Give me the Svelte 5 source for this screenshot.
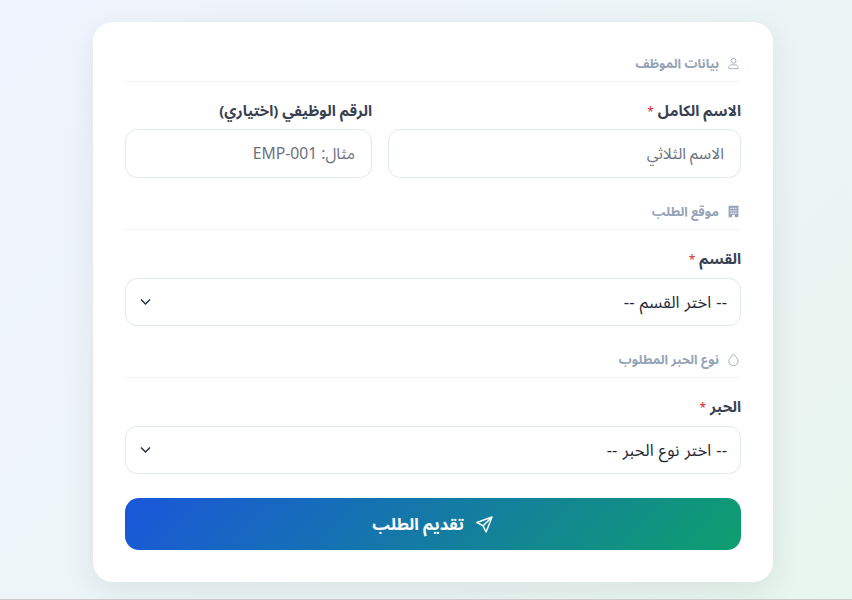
<script>
  const departments = ['-- اختر القسم --'];
  const inks = ['-- اختر نوع الحبر --'];
</script>

<main class="page" dir="rtl">
  <form class="card" onsubmit={(e) => e.preventDefault()}>
    <div class="section first">
      <svg viewBox="0 0 24 24" class="icon"><circle cx="12" cy="7" r="4.500"/><path d="M3.500 21.500v-2c0-2.800 2.200-5 5-5h7c2.800 0 5 2.200 5 5v2z"/></svg>
      <span>بيانات الموظف</span>
    </div>
    <div class="row two">
      <div class="field">
        <label for="name">الاسم الكامل <b>*</b></label>
        <input id="name" placeholder="الاسم الثلاثي" />
      </div>
      <div class="field">
        <label for="emp">الرقم الوظيفي (اختياري)</label>
        <input id="emp" placeholder="مثال: EMP-001" />
      </div>
    </div>

    <div class="section">
      <svg viewBox="0 0 24 24" class="icon building"><path class="walls" d="M3 1.500h18v21h-6.500V18h-5v4.500H3z"/><path class="win" d="M6 5h3.500v2.500H6zM10.500 5H14v2.500h-3.500zM15 5h3v2.500h-3zM6 9.500h3.500V12H6zM10.500 9.500H14V12h-3.500zM15 9.500h3V12h-3zM6 14h3.500v2.500H6zM10.500 14H14v2.500h-3.500zM15 14h3v2.500h-3z"/></svg>
      <span>موقع الطلب</span>
    </div>
    <div class="field">
      <label for="dept">القسم <b>*</b></label>
      <div class="select">
        <select id="dept">
          {#each departments as d}<option>{d}</option>{/each}
        </select>
        <svg viewBox="0 0 16 16" class="chev"><path d="M2.500 5.500 8 11l5.500-5.500"/></svg>
      </div>
    </div>

    <div class="section">
      <svg viewBox="0 0 24 24" class="icon"><path d="M12 1.500c4 5 8.500 9 8.500 13.500a8.500 8.500 0 0 1-17 0c0-4.500 4.500-8.500 8.500-13.500z"/></svg>
      <span>نوع الحبر المطلوب</span>
    </div>
    <div class="field">
      <label for="ink">الحبر <b>*</b></label>
      <div class="select">
        <select id="ink">
          {#each inks as d}<option>{d}</option>{/each}
        </select>
        <svg viewBox="0 0 16 16" class="chev"><path d="M2.500 5.500 8 11l5.500-5.500"/></svg>
      </div>
    </div>

    <button type="submit">
      <svg viewBox="0 0 24 24" class="send"><path d="M21.500 2.500 2.500 9.500l7.500 4 4 8zM21.500 2.500 10 14"/></svg>
      <span>تقديم الطلب</span>
    </button>
  </form>
</main>

<style>
  :global(body) {
    margin: 0;
  }
  .page {
    box-sizing: border-box;
    height: 600px;
    padding: 22px 0 0 14px;
    background: linear-gradient(135deg, #f0f4ff 0%, #e8f5ee 100%);
    border-bottom: 1px solid #c8cbc9;
    font-family: "Noto Sans Arabic", "Noto Sans", "DejaVu Sans", sans-serif;
    overflow: hidden;
  }
  .card {
    box-sizing: border-box;
    width: 680px;
    height: 560px;
    margin: 0 auto;
    padding: 32px;
    background: #fff;
    border-radius: 20px;
    box-shadow: 0 8px 32px rgba(0, 0, 0, 0.08);
    display: flex;
    flex-direction: column;
  }
  .section {
    display: flex;
    align-items: center;
    gap: 8px;
    height: 19px;
    margin: 24px 0 18px;
    padding-bottom: 8px;
    border-bottom: 1px solid #f1f5f9;
    color: #94a3b8;
    font-size: 12.800px;
    font-weight: 700;
    box-sizing: content-box;
  }
  .section.first {
    margin-top: 0;
  }
  .icon {
    width: 13px;
    height: 13px;
    fill: none;
    stroke: #94a3b8;
    stroke-width: 1.600;
    margin-right: 1px;
  }
  .icon.building {
    stroke: none;
  }
  .icon .walls {
    fill: #94a3b8;
  }
  .icon .win {
    fill: #e2e8f0;
  }
  .row.two {
    display: grid;
    grid-template-columns: 353px 247px;
    gap: 16px;
  }
  .row.two label {
    margin-bottom: 9px;
  }
  .field {
    display: flex;
    flex-direction: column;
  }
  label {
    font-size: 15px;
    font-weight: 700;
    color: #374151;
    height: 18px;
    line-height: 18px;
    margin-top: 2px;
    margin-bottom: 10px;
  }
  label b {
    color: #e02424;
    font-size: 12px;
    font-weight: 400;
  }
  input,
  select {
    box-sizing: border-box;
    width: 100%;
    border: 1px solid #e2e8f0;
    border-radius: 12px;
    background: #fff;
    font-family: inherit;
    font-size: 15.700px;
    color: #1f2937;
    outline: none;
  }
  input {
    height: 49px;
    padding: 0 16px;
  }
  input::placeholder {
    color: #6b7280;
  }
  .select {
    position: relative;
  }
  select {
    height: 48px;
    padding: 0 13px 0 40px;
    appearance: none;
    display: block;
    font-size: 16.500px;
    word-spacing: 1px;
    text-align: right;
  }
  .chev {
    position: absolute;
    left: 14px;
    top: 17px;
    width: 13px;
    height: 13px;
    fill: none;
    stroke: #1f2937;
    stroke-width: 1.700;
    pointer-events: none;
  }
  button {
    margin-top: 24px;
    height: 52px;
    flex: none;
    border: 0;
    border-radius: 14px;
    background: linear-gradient(135deg, #1a56db, #0e9f6e);
    color: #fff;
    font-family: inherit;
    font-size: 16.500px;
    font-weight: 700;
    display: flex;
    align-items: center;
    justify-content: center;
    gap: 11px;
  }
  .send {
    width: 19px;
    height: 19px;
    fill: none;
    stroke: #fff;
    stroke-width: 1.800;
    stroke-linejoin: round;
  }
</style>
